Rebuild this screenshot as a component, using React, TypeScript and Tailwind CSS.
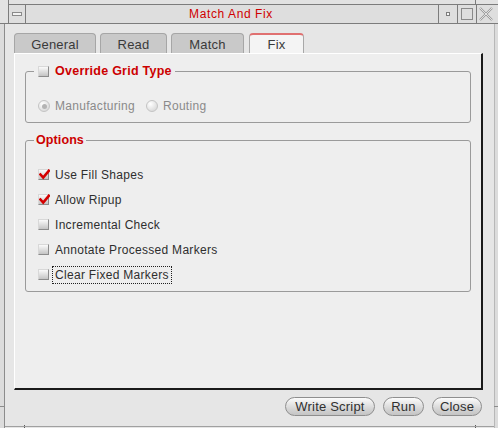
import React from "react";

const font = "font-['Liberation_Sans','DejaVu_Sans',sans-serif]";

function CheckBox({ checked }: { checked?: boolean }) {
  return (
    <span className="relative flex w-[11px] h-[11px] shrink-0 items-center justify-center border border-t-[#d8d8d8] border-l-[#d8d8d8] border-r-[#8c8c8c] border-b-[#8c8c8c] bg-[linear-gradient(180deg,#fafafa,#c4c4c4)]">
      {checked && (
        <svg width="11" height="11" viewBox="0 0 11 11" className="absolute left-[0px] top-[-1px]">
          <path d="M1.5 5.5 L4.2 8.5 L9.8 1.8" fill="none" stroke="#d40000" strokeWidth="2.6" strokeLinecap="square" />
        </svg>
      )}
    </span>
  );
}

function Radio({ on }: { on?: boolean }) {
  return (
    <span className="flex w-[12px] h-[12px] shrink-0 items-center justify-center rounded-full border border-[#c4c4c4] bg-[radial-gradient(circle_at_35%_30%,#ffffff,#d0d0d0)]">
      {on && <span className="w-[5px] h-[5px] rounded-full bg-[#b4b4b4]" />}
    </span>
  );
}

function Option({ label, checked, focus }: { label: string; checked?: boolean; focus?: boolean }) {
  return (
    <div className="flex h-[25px] items-center">
      <CheckBox checked={checked} />
      {focus ? (
        <span className="ml-[3px] border border-dotted border-[#202020] px-[2px] leading-[16px]">{label}</span>
      ) : (
        <span className="ml-[6px] leading-[16px]">{label}</span>
      )}
    </div>
  );
}

function Tab({ label, active, w }: { label: string; active?: boolean; w: string }) {
  return (
    <div
      className={
        "flex h-[20px] items-center justify-center rounded-t-[4px] border border-b-0 text-[13px] tracking-[0.2px] text-[#3a3a3a] " +
        w +
        (active
          ? " bg-[#f4f4f4] border-[#a8a8a8] border-t-2 border-t-[#e07070] pt-[1px]"
          : " bg-[#c9c9c9] border-[#a6a6a6] mt-[1px] h-[19px] pt-[2px]")
      }
    >
      {label}
    </div>
  );
}

function Pill({ label, w }: { label: string; w: string }) {
  return (
    <button
      className={
        "flex h-[19px] items-center justify-center rounded-full border border-[#8e8e8e] bg-[linear-gradient(180deg,#fbfbfb,#d2d2d2_70%,#c4c4c4)] text-[13px] tracking-[0.2px] text-[#303030] " +
        w
      }
    >
      {label}
    </button>
  );
}

export default function App() {
  return (
    <div className={"relative flex h-[428px] w-[498px] flex-col overflow-hidden bg-[#e6e6e6] " + font}>
      {/* top edge */}
      <div className="flex h-[4px] shrink-0">
        <div className="w-[8px] bg-[#e2e2e2]" />
        <div className="w-px bg-[#7c7c7c]" />
        <div className="flex-1 bg-[#e2e2e2]" />
        <div className="w-px bg-[#7c7c7c]" />
        <div className="w-[22px] bg-[#e2e2e2]" />
      </div>

      {/* title bar */}
      <div className="flex h-[20px] shrink-0 border-b border-[#7c7c7c]">
        <div className="w-[8px] bg-[#e2e2e2]" />
        <div className="flex flex-1 border-t border-l border-[#7c7c7c] bg-[#dedede]">
          <div className="flex w-[17px] items-center justify-center border-r border-[#7c7c7c]">
            <span className="h-[4px] w-[10px] border border-[#8a8a8a] bg-[#f2f2f2]" />
          </div>
          <div className="flex flex-1 items-center justify-center pr-[2px] text-[12px] tracking-[0.6px] text-[#d00000]">
            Match And Fix
          </div>
          <div className="flex w-[19px] items-center justify-center border-l border-[#7c7c7c]">
            <span className="h-[4px] w-[4px] border border-[#7c7c7c] bg-[#f6f6f6]" />
          </div>
          <div className="flex w-[19px] items-center justify-center border-l border-[#7c7c7c]">
            <span className="h-[12px] w-[12px] border border-[#8a8a8a]" />
          </div>
          <div className="flex w-[19px] items-center justify-center border-l border-[#7c7c7c]">
            <svg width="14" height="14" viewBox="0 0 14 14">
              <path d="M1 1 L13 13 M13 1 L1 13" stroke="#9a9a9a" strokeWidth="2.2" fill="none" />
              <path d="M1 1 L13 13 M13 1 L1 13" stroke="#f4f4f4" strokeWidth="0.8" fill="none" />
            </svg>
          </div>
          <div className="w-[3px]" />
        </div>
      </div>

      {/* body */}
      <div className="flex flex-1">
        <div className="w-[5px] border-r border-[#8c8c8c] bg-[#dcdcdc]" />
        <div className="flex flex-1 flex-col pl-[9px] pr-[9px] pt-[9px]">
          {/* tabs */}
          <div className="flex h-[20px] items-end gap-[4px]">
            <Tab label="General" w="w-[82px]" />
            <Tab label="Read" w="w-[67px]" />
            <Tab label="Match" w="w-[73px]" />
            <Tab label="Fix" w="w-[55px] ml-[1px]" active />
          </div>

          {/* panel */}
          <div className="flex h-[337px] w-[469px] flex-col border-t border-l border-t-white border-l-white border-r-2 border-b-2 border-r-[#1a1a1a] border-b-[#1a1a1a] bg-[#eeeeee] pl-[10px] pr-[10px] text-[12px] tracking-[0.3px] text-[#2e2e2e]">
            <fieldset className="mt-[10px] rounded-[3px] border border-[#9a9a9a] pb-[8px] pl-[8px]">
              <legend className="flex items-center pl-[4px] pr-[3px]">
                <CheckBox />
                <span className="ml-[6px] text-[12.5px] font-bold leading-[14px] tracking-[0.25px] text-[#cc0000]">Override Grid Type</span>
              </legend>
              <div className="mt-[20px] flex h-[16px] items-center pl-[4px] text-[#8a8a8a]">
                <Radio on />
                <span className="ml-[5px]">Manufacturing</span>
                <span className="ml-[11px]" />
                <Radio />
                <span className="ml-[5px]">Routing</span>
              </div>
            </fieldset>

            <fieldset className="mt-[10px] rounded-[3px] border border-[#9a9a9a] pb-[4px] pl-[8px]">
              <legend className="px-[2px] text-[12.5px] font-bold leading-[14px] tracking-[0.1px] text-[#cc0000]">Options</legend>
              <div className="mt-[15px] flex flex-col pl-[4px]">
                <Option label="Use Fill Shapes" checked />
                <Option label="Allow Ripup" checked />
                <Option label="Incremental Check" />
                <Option label="Annotate Processed Markers" />
                <Option label="Clear Fixed Markers" focus />
              </div>
            </fieldset>
          </div>

          {/* buttons */}
          <div className="mt-[7px] flex w-[469px] justify-end gap-[8px] pr-[1px]">
            <Pill label="Write Script" w="w-[90px]" />
            <Pill label="Run" w="w-[41px]" />
            <Pill label="Close" w="w-[50px]" />
          </div>
        </div>
        <div className="w-[4px] border-l border-[#b8b8b8] bg-[#dcdcdc]" />
      </div>

      {/* frame resize ticks */}
      <span className="absolute left-0 top-[406px] h-px w-[5px] bg-[#8c8c8c]" />
      <span className="absolute right-0 top-[406px] h-px w-[4px] bg-[#8c8c8c]" />
      <span className="absolute bottom-0 left-[24px] h-[3px] w-px bg-[#5a5a5a]" />
      <span className="absolute bottom-0 left-[475px] h-[3px] w-px bg-[#5a5a5a]" />
      <span className="absolute bottom-[1px] left-[5px] h-px w-[489px] bg-[#a0a0a0]" />
    </div>
  );
}
